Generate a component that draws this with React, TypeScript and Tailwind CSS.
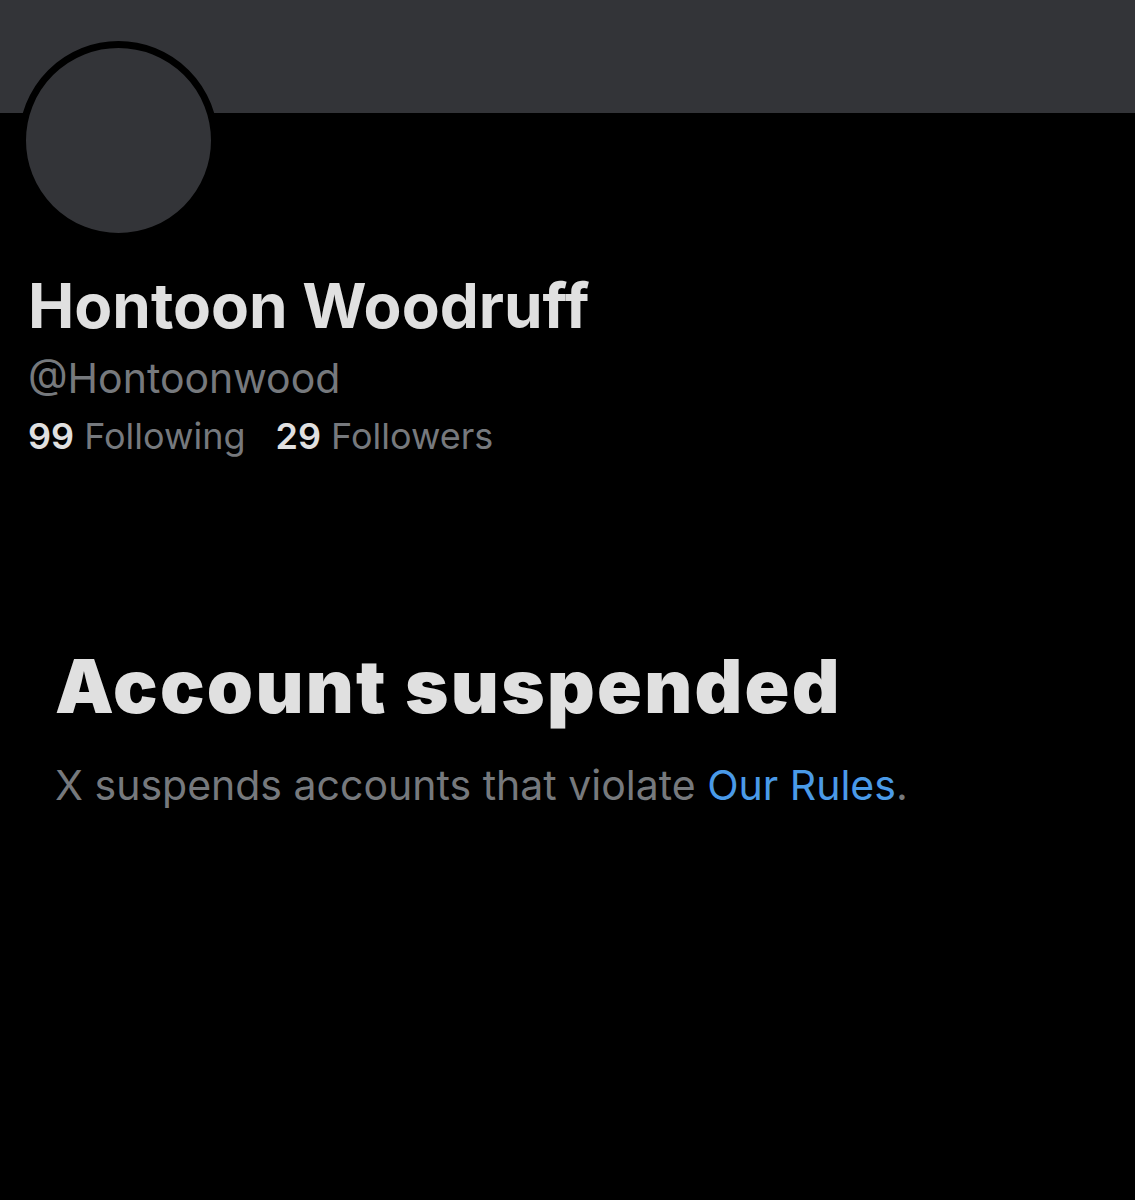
export default function App() {
  return (
    <div
      className="relative h-[1200px] w-[1135px] overflow-hidden bg-black"
      style={{ fontFamily: "Inter, 'Liberation Sans', sans-serif" }}
    >
      <div className="h-[113px] w-full bg-[#333438]" />

      <div className="absolute left-[19px] top-[41px] h-[199px] w-[199px] rounded-full border-[7px] border-black bg-[#333438]" />

      <div className="px-[28px] pt-[158px]">
        <div className="text-[62px] font-bold leading-[70px] text-[#e0e0e0]">
          Hontoon Woodruff
        </div>
        <div className="mt-[13px] text-[41px] leading-[48px] text-[#76797d]">
          @Hontoonwood
        </div>
        <div className="mt-[12px] flex gap-[30px] text-[36px] leading-[44px]">
          <span>
            <span className="font-semibold text-[#e0e0e0]">99</span>
            <span className="text-[#76797d]"> Following</span>
          </span>
          <span>
            <span className="font-semibold text-[#e0e0e0]">29</span>
            <span className="text-[#76797d]"> Followers</span>
          </span>
        </div>
      </div>

      <div className="px-[55px] pt-[186px]">
        <div className="text-[74px] font-black leading-[84px] tracking-[2.3px] text-[#e0e0e0]">
          Account suspended
        </div>
        <div className="mt-[33px] text-[41px] leading-[48px] text-[#76797d]">
          X suspends accounts that violate{" "}
          <span className="text-[#4a9ae8]">Our Rules</span>.
        </div>
      </div>
    </div>
  );
}
